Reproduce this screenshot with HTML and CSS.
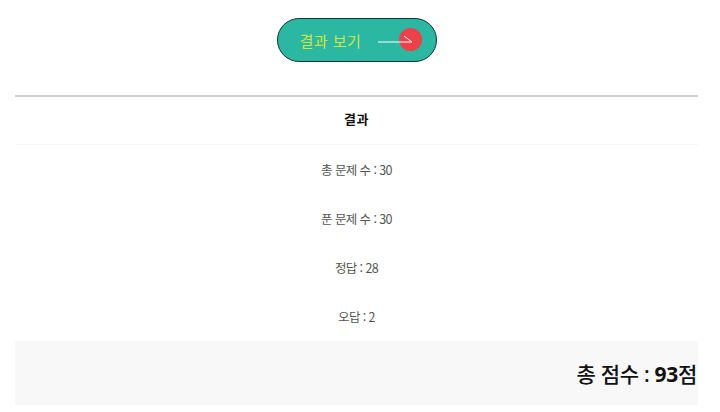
FILE: index.html
```html
<!DOCTYPE html>
<html lang="ko">
<head>
<meta charset="utf-8">
<link rel="stylesheet" href="styles.css">
</head>
<body>
<div class="page">
  <div class="btn-wrap">
    <button class="result-btn">
      <span class="btn-label">결과 보기</span>
      <span class="btn-icon">
        <span class="dot"></span>
        <svg class="arrow" width="40" height="20" viewBox="0 0 40 20">
          <line x1="0" y1="15" x2="34" y2="15" stroke="#ffffff" stroke-width="1"/>
          <line x1="26" y1="9" x2="34" y2="15" stroke="#ffffff" stroke-width="1"/>
        </svg>
      </span>
    </button>
  </div>
  <div class="result">
    <div class="result-head">결과</div>
    <div class="result-row">총 문제 수 : 30</div>
    <div class="result-row">푼 문제 수 : 30</div>
    <div class="result-row">정답 : 28</div>
    <div class="result-row">오답 : 2</div>
    <div class="total"><span>총 점수 : <b>93</b>점</span></div>
  </div>
</div>
</body>
</html>
```
FILE: styles.css
```css
html, body {
  margin: 0;
  padding: 0;
  background: #ffffff;
  font-family: "Noto Sans CJK KR", "Noto Sans", sans-serif;
}
.page {
  padding: 18px 22px 0 15px;
}
.btn-wrap {
  display: flex;
  justify-content: center;
}
.result-btn {
  width: 160px;
  height: 44px;
  box-sizing: border-box;
  border: 1.5px solid #17312c;
  border-radius: 22px;
  background: #2bb8a3;
  display: flex;
  align-items: center;
  padding: 0 0 0 22px;
  font-family: inherit;
  cursor: pointer;
}
.btn-label {
  color: #d7e437;
  font-size: 15px;
  letter-spacing: 0.5px;
  line-height: 1;
}
.btn-icon {
  position: relative;
  width: 48px;
  height: 24px;
  margin-left: 17px;
}
.dot {
  position: absolute;
  left: 21px;
  top: 0;
  width: 23px;
  height: 23px;
  border-radius: 50%;
  background: #ef4047;
}
.arrow {
  position: absolute;
  left: 0;
  top: -1px;
}
.result {
  margin-top: 33px;
  border-top: 2px solid #d0d0d0;
}
.result-head {
  height: 48px;
  box-sizing: border-box;
  padding-bottom: 4px;
  display: flex;
  align-items: center;
  justify-content: center;
  font-size: 13px;
  font-weight: 700;
  color: #111;
  border-bottom: 1px solid #f6f6f6;
  letter-spacing: 0.5px;
}
.result-row {
  height: 49px;
  display: flex;
  align-items: center;
  justify-content: center;
  font-size: 12.5px;
  color: #555;
  letter-spacing: -0.6px;
}
.total {
  height: 64px;
  background: #f8f8f8;
  display: flex;
  align-items: center;
  justify-content: flex-end;
  font-family: "Noto Sans", "Noto Sans CJK KR", sans-serif;
  font-size: 21px;
  font-weight: 500;
  color: #111;
  padding-right: 1px;
  letter-spacing: -0.3px;
}
.total b {
  font-weight: 700;
}
```
